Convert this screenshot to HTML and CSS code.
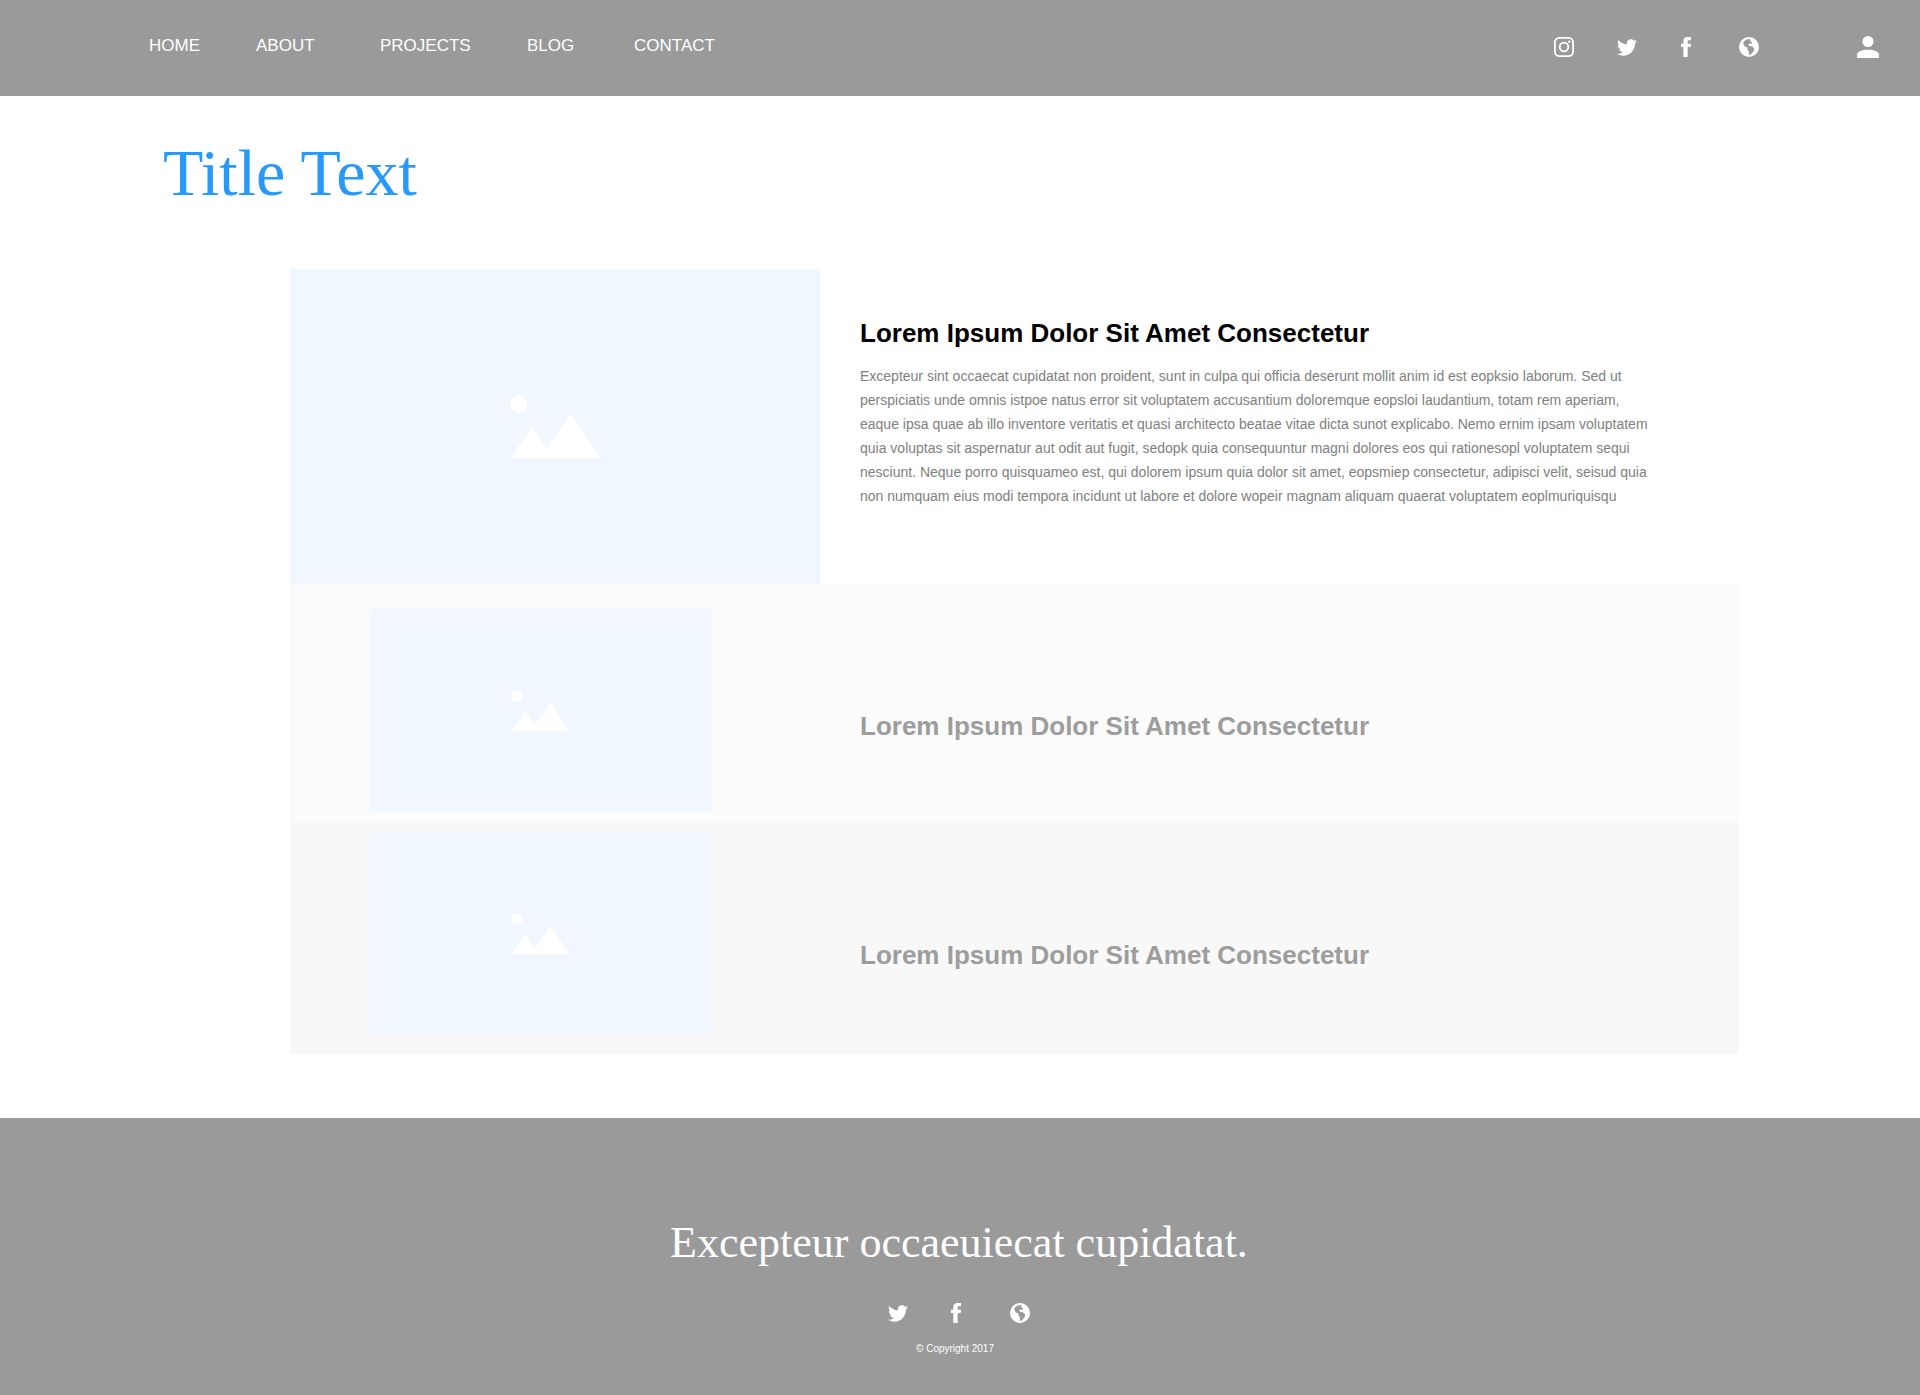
FILE: index.html
```html
<!DOCTYPE html>
<html lang="en">
<head>
<meta charset="utf-8">
<meta name="viewport" content="width=device-width, initial-scale=1">
<title>Title Text</title>
<link rel="stylesheet" href="styles.css">
</head>
<body>
<svg class="sprite" aria-hidden="true">
  <symbol id="instagram" viewBox="0 0 20 20">
    <rect x="0.9" y="0.9" width="18.2" height="18.2" rx="4.6" fill="none" stroke="currentColor" stroke-width="1.8"/>
    <circle cx="10" cy="10" r="4.3" fill="none" stroke="currentColor" stroke-width="1.8"/>
    <circle cx="15.3" cy="4.7" r="1.2" fill="currentColor"/>
  </symbol>
  <symbol id="twitter" viewBox="20 64 472 384">
    <path fill="currentColor" d="M492 109.5c-17.4 7.7-36 12.9-55.6 15.3 20-12 35.4-31 42.6-53.6-18.7 11.1-39.4 19.2-61.5 23.5C399.8 75.8 374.6 64 346.8 64c-53.5 0-96.8 43.4-96.8 96.9 0 7.6.8 15 2.5 22.1-80.5-4-151.9-42.6-199.6-101.3-8.3 14.3-13.1 31-13.1 48.7 0 33.6 17.2 63.3 43.2 80.7-16-.4-31-4.8-44-12.1v1.2c0 47 33.4 86.1 77.7 95-8.1 2.2-16.7 3.4-25.5 3.4-6.2 0-12.3-.6-18.2-1.8 12.3 38.5 48.1 66.5 90.5 67.3-33.1 26-74.9 41.5-120.3 41.5-7.8 0-15.5-.5-23.1-1.4C62.8 432 113.7 448 168.3 448 346.6 448 444 300.3 444 172.2c0-4.2-.1-8.4-.3-12.5C462.6 146 479 129 492 109.5z"/>
  </symbol>
  <symbol id="facebook" viewBox="160 64 192 384">
    <path fill="currentColor" d="M288 192v-38.1c0-17.2 3.8-25.9 30.5-25.9H352V64h-55.9c-68.5 0-91.1 31.4-91.1 85.3V192h-45v64h45v192h83V256h56.9l7.6-64H288z"/>
  </symbol>
  <symbol id="globe" viewBox="0 0 20 20">
    <path fill="currentColor" fill-rule="evenodd" d="M10 0a10 10 0 1 0 0 20a10 10 0 0 0 0-20zM11.2 2.1L11.6 4.6L13.2 5.6L12.6 6.9L10.8 6.3L9.3 7.2L9.6 8.6L13.2 9.6L15.2 11.4L14.8 14L12.6 16.4L11 18.3L9.9 17.6L10 14.6L8.4 12.6L8.5 10.6L5.8 9.4L4.2 6.6L4.8 4.6L7.4 2.5z"/>
  </symbol>
  <symbol id="person" viewBox="0 0 22 22">
    <circle cx="11" cy="5.5" r="5.5" fill="currentColor"/>
    <path fill="currentColor" d="M0 22v-3.2C0 15.4 5 13.8 11 13.8s11 1.6 11 5V22z"/>
  </symbol>
  <symbol id="picture" viewBox="0 0 91 63">
    <ellipse cx="8.7" cy="9" rx="8.7" ry="9" fill="currentColor"/>
    <path fill="currentColor" d="M0.5 63L22 31.7L37 53.6L60.8 19.3L90.5 63z"/>
  </symbol>
</svg>

<header class="site-header">
  <nav class="main-nav" aria-label="Main">
    <a href="#">HOME</a>
    <a href="#">ABOUT</a>
    <a href="#">PROJECTS</a>
    <a href="#">BLOG</a>
    <a href="#">CONTACT</a>
  </nav>
  <div class="header-icons">
    <a href="#" aria-label="Instagram"><svg class="icon"><use href="#instagram"/></svg></a>
    <a href="#" aria-label="Twitter"><svg class="icon icon-bird"><use href="#twitter"/></svg></a>
    <a href="#" aria-label="Facebook"><svg class="icon"><use href="#facebook"/></svg></a>
    <a href="#" aria-label="Website"><svg class="icon"><use href="#globe"/></svg></a>
    <a href="#" aria-label="Account"><svg class="icon icon-person"><use href="#person"/></svg></a>
  </div>
</header>

<main>
  <h1 class="page-title">Title Text</h1>
  <div class="articles">
    <article class="feature">
      <div class="picture"><svg class="glyph glyph-large"><use href="#picture"/></svg></div>
      <div class="feature-text">
        <h2>Lorem Ipsum Dolor Sit Amet Consectetur</h2>
        <p>Excepteur sint occaecat cupidatat non proident, sunt in culpa qui officia deserunt mollit anim id est eopksio laborum. Sed ut perspiciatis unde omnis istpoe natus error sit voluptatem accusantium doloremque eopsloi laudantium, totam rem aperiam, eaque ipsa quae ab illo inventore veritatis et quasi architecto beatae vitae dicta sunot explicabo. Nemo ernim ipsam voluptatem quia voluptas sit aspernatur aut odit aut fugit, sedopk quia consequuntur magni dolores eos qui rationesopl voluptatem sequi nesciunt. Neque porro quisquameo est, qui dolorem ipsum quia dolor sit amet, eopsmiep consectetur, adipisci velit, seisud quia non numquam eius modi tempora incidunt ut labore et dolore wopeir magnam aliquam quaerat voluptatem eoplmuriquisqu</p>
      </div>
    </article>
    <article class="row row-light">
      <div class="picture"><svg class="glyph"><use href="#picture"/></svg></div>
      <h2>Lorem Ipsum Dolor Sit Amet Consectetur</h2>
    </article>
    <article class="row row-dark">
      <div class="picture"><svg class="glyph"><use href="#picture"/></svg></div>
      <h2>Lorem Ipsum Dolor Sit Amet Consectetur</h2>
    </article>
  </div>
</main>

<footer class="site-footer">
  <p class="quote">Excepteur occaeuiecat cupidatat.</p>
  <div class="footer-icons">
    <a href="#" aria-label="Twitter"><svg class="icon icon-bird"><use href="#twitter"/></svg></a>
    <a href="#" aria-label="Facebook"><svg class="icon"><use href="#facebook"/></svg></a>
    <a href="#" aria-label="Website"><svg class="icon"><use href="#globe"/></svg></a>
  </div>
  <p class="copyright">© Copyright 2017</p>
</footer>
</body>
</html>
```
FILE: styles.css
```css
* {
  box-sizing: border-box;
}

body {
  margin: 0;
  min-height: 100vh;
  display: flex;
  flex-direction: column;
  background: #fff;
  font-family: Arial, "Liberation Sans", sans-serif;
}

h1,
h2,
p {
  margin: 0;
}

a {
  color: inherit;
  text-decoration: none;
}

.sprite {
  display: none;
}

.icon {
  display: block;
  width: 20px;
  height: 20px;
}

.icon-bird {
  height: 17px;
}

.icon-person {
  width: 22px;
  height: 22px;
}

.site-header {
  display: flex;
  justify-content: space-between;
  min-height: 96px;
  padding: 36px 41px 36px 149px;
  background: #9a9a9a;
  color: #fff;
}

.main-nav {
  display: grid;
  grid-template-columns: 107px 124px 147px 107px auto;
  font-size: 17px;
  line-height: 20px;
}

.header-icons {
  display: grid;
  grid-template-columns: 63px 59px 63px 118px auto;
  align-items: center;
  height: 22px;
}

.page-title {
  padding: 39px 163px 0;
  color: #2699fb;
  font-family: Georgia, "Liberation Serif", serif;
  font-size: 66px;
  font-weight: 400;
  line-height: 76px;
}

.articles {
  margin: 58px 181px 64px 290px;
}

.picture {
  display: grid;
  place-items: center;
  background: #f0f7ff;
  color: #fff;
}

.glyph {
  width: 59px;
  height: 41px;
}

.glyph-large {
  width: 91px;
  height: 63px;
}

h2 {
  font-size: 26px;
  line-height: 30px;
}

.feature {
  display: grid;
  grid-template-columns: 530px 1fr;
  column-gap: 40px;
  min-height: 315px;
}

.feature-text {
  padding: 49px 88px 0 0;
}

.feature-text p {
  margin-top: 16px;
  color: #808080;
  font-size: 14px;
  line-height: 24px;
}

.row {
  display: grid;
  grid-template-columns: 343px 1fr;
  column-gap: 148px;
  padding-left: 79px;
}

.row .picture {
  height: 203px;
}

.row h2 {
  align-self: end;
  color: #9d9d9d;
}

.row-light {
  padding-top: 25px;
  padding-bottom: 10px;
  background: #fbfbfb;
}

.row-light h2 {
  padding-bottom: 71px;
}

.row-dark {
  padding-top: 10px;
  padding-bottom: 19px;
  background: #f8f8f8;
}

.row-dark h2 {
  padding-bottom: 65px;
}

.site-footer {
  flex: 1;
  display: flex;
  flex-direction: column;
  align-items: center;
  padding: 99px 2px 36px 0;
  background: #9a9a9a;
  color: #fff;
}

.quote {
  font-family: Georgia, "Liberation Serif", serif;
  font-size: 44px;
  line-height: 52px;
}

.footer-icons {
  display: grid;
  grid-template-columns: 58px 64px 20px;
  align-items: center;
  height: 20px;
  margin-top: 34px;
}

.copyright {
  margin-top: 20px;
  padding-right: 8px;
  font-size: 10px;
  line-height: 12px;
}
```
